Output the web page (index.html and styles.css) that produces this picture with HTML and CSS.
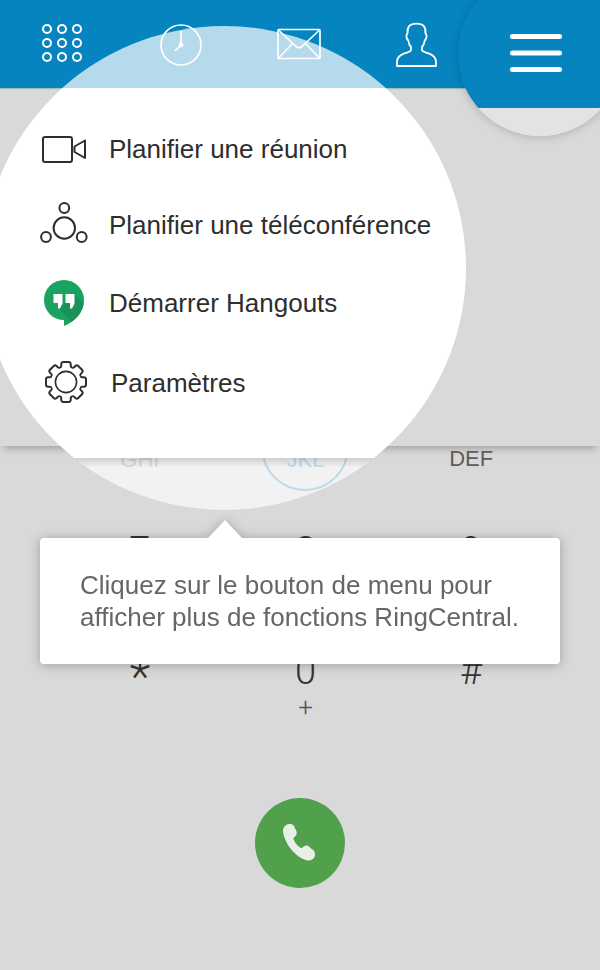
FILE: index.html
```html
<!DOCTYPE html>
<html lang="fr">
<head>
<meta charset="utf-8">
<meta name="viewport" content="width=device-width, initial-scale=1">
<title>RingCentral</title>
<link rel="stylesheet" href="styles.css">
</head>
<body>
<div class="screen">
  <header class="topbar">
    <nav class="tabs">
      <a class="tab" href="#clavier" aria-label="Clavier">
        <svg width="42" height="40" viewBox="0 0 42 40" fill="none" stroke="#fff" stroke-width="2">
          <circle cx="6" cy="5" r="4"/><circle cx="21" cy="5" r="4"/><circle cx="36" cy="5" r="4"/>
          <circle cx="6" cy="19" r="4"/><circle cx="21" cy="19" r="4"/><circle cx="36" cy="19" r="4"/>
          <circle cx="6" cy="33" r="4"/><circle cx="21" cy="33" r="4"/><circle cx="36" cy="33" r="4"/>
        </svg>
      </a>
      <a class="tab" href="#historique" aria-label="Historique">
        <svg width="42" height="44" viewBox="0 0 42 44" fill="none" stroke="#fff" stroke-width="1.7">
          <circle cx="21" cy="23" r="20"/>
          <path d="M21 9v14l-6 6"/>
          <circle cx="21" cy="23" r="1.6" fill="#fff"/>
        </svg>
      </a>
      <a class="tab" href="#messages" aria-label="Messages">
        <svg width="44" height="32" viewBox="0 0 44 32" fill="none" stroke="#fff" stroke-width="1.7" stroke-linejoin="round">
          <rect x="1" y="1.5" width="42" height="29" rx="1"/>
          <path d="M1.500 2 19 18.500Q22 21 25 18.500L42.500 2M1.500 30 15.500 15.500M42.500 30 28.500 15.500"/>
        </svg>
      </a>
      <a class="tab" href="#contacts" aria-label="Contacts">
        <svg width="42" height="46" viewBox="0 -1 42 46" fill="none" stroke="#fff" stroke-width="1.800" stroke-linejoin="round">
          <path d="M1 44V40C1 35 5 32.500 9 31.200C12 30.200 15 29.500 15 28V25C13.500 23.500 12.700 21.500 12.300 18.500C10.500 17 9.500 13 11.500 11.500C11 5 13.500 1.700 20.500 1.700S30 5 29.500 11.500C31.500 13 30.500 17 28.700 18.500C28.300 21.500 27.500 23.500 26 25V28C26 29.500 29 30.200 32 31.200C36 32.500 40 35 40 40V44Z"/>
        </svg>
      </a>
    </nav>
  </header>

  <ul class="menu">
    <li class="menu-row">
      <a class="menu-link" href="#reunion">
        <svg width="48" height="48" viewBox="0 0 48 48" fill="none" stroke="#2e2e2e" stroke-width="2" stroke-linejoin="round">
          <rect x="3" y="12" width="29" height="25" rx="2"/>
          <path d="M45 15.500V33L34.500 27V21.500Z"/>
        </svg>
        <span>Planifier une réunion</span>
      </a>
    </li>
    <li class="menu-row">
      <a class="menu-link" href="#teleconference">
        <svg width="48" height="48" viewBox="0 0 48 48" fill="none" stroke="#2e2e2e" stroke-width="2">
          <circle cx="24.300" cy="27" r="10.700"/>
          <circle cx="24.300" cy="7" r="4.900"/>
          <circle cx="6" cy="36" r="4.900"/>
          <circle cx="41.700" cy="36" r="4.900"/>
        </svg>
        <span>Planifier une téléconférence</span>
      </a>
    </li>
    <li class="menu-row menu-row-tall">
      <a class="menu-link" href="#hangouts">
        <svg width="48" height="48" viewBox="0 0 48 48">
          <path fill="#1aa260" d="M24 1a20 20 0 0 1 20 20.500C44 32 36 42 24 47V41A20 20 0 0 1 24 1Z"/>
          <path fill="#1b9158" d="M34.500 15 43.700 24C42.500 32 38.500 38 31.500 43L19 29Z"/>
          <path fill="#fff" d="M13.500 15h9v9.500l-2.500 5h-2v-5.500h-4.500zM25.500 15h9v9.500l-2.500 5h-2v-5.500h-4.500z"/>
        </svg>
        <span>Démarrer Hangouts</span>
      </a>
    </li>
    <li class="menu-row menu-row-tall">
      <a class="menu-link" href="#parametres">
        <svg width="50" height="48" viewBox="0 0 50 48" fill="none" stroke="#2e2e2e" stroke-width="2">
          <defs>
            <path id="tooth" d="M-6.200-14.970C-4.500-14.300-4.800-16.500-4.700-18Q-4.500-20-2.700-20H2.700Q4.500-20 4.700-18C4.800-16.500 4.500-14.300 6.200-14.970"/>
          </defs>
          <g transform="translate(26 23)">
            <circle r="10.600" stroke-width="1.600"/>
            <use href="#tooth"/>
            <use href="#tooth" transform="rotate(45)"/>
            <use href="#tooth" transform="rotate(90)"/>
            <use href="#tooth" transform="rotate(135)"/>
            <use href="#tooth" transform="rotate(180)"/>
            <use href="#tooth" transform="rotate(225)"/>
            <use href="#tooth" transform="rotate(270)"/>
            <use href="#tooth" transform="rotate(315)"/>
          </g>
        </svg>
        <span>Paramètres</span>
      </a>
    </li>
  </ul>

  <main class="dialer">
    <div class="keypad">
      <button class="key key-letters">GHI</button>
      <button class="key key-letters key-active">JKL</button>
      <button class="key key-letters key-dark">DEF</button>
      <button class="key">7</button>
      <button class="key">8</button>
      <button class="key">9</button>
      <button class="key key-star">*</button>
      <button class="key">0<span class="key-sub">+</span></button>
      <button class="key">#</button>
    </div>
    <button class="call" aria-label="Appeler">
      <svg width="90" height="90" viewBox="0 0 90 90">
        <path fill="#e8efe6" d="M34 26C38 25.500 39.500 28 40 30.500C41.500 32.500 42.500 35 41 37.500L38.500 40C38 43 43 48.500 46 50C48 50 48.500 47.500 51.500 47.500C54 47.500 54.500 49.500 56 50.500C58.500 51.500 60 53.500 60 56.500C60 60 57 62.500 53.500 62.500C48 62 43 58.500 38 53.500C33 48 28.500 40 28 33C28 29 30.500 26.500 34 26Z"/>
      </svg>
    </button>
  </main>

  <div class="spotlight"></div>

  <button class="menu-button" aria-label="Menu">
    <svg width="52" height="38" viewBox="0 0 52 38" stroke="#fff" stroke-width="5" stroke-linecap="round">
      <path d="M2.500 2.500h47M2.500 19h47M2.500 35.500h47"/>
    </svg>
  </button>

  <div class="tooltip" role="tooltip">
    <p class="tooltip-text">Cliquez sur le bouton de menu pour afficher plus de fonctions RingCentral.</p>
  </div>
</div>
</body>
</html>
```
FILE: styles.css
```css
* {
  box-sizing: border-box;
}

body {
  margin: 0;
  background: #d9d9d9;
  color: #2e2e2e;
  font-family: "Liberation Sans", Arial, sans-serif;
  font-size: 26px;
}

button {
  margin: 0;
  padding: 0;
  border: 0;
  background: none;
  color: inherit;
  font: inherit;
}

svg {
  display: block;
  flex: none;
}

.screen {
  position: relative;
  min-height: 100vh;
  overflow: hidden;
}

.topbar {
  padding: 0 5px 0 3px;
  background: #0684bf;
  box-shadow: 0 1px 1px rgba(6, 132, 140, 0.3);
}

.tabs {
  display: grid;
  grid-template-columns: repeat(5, 1fr);
  height: 88px;
}

.tab {
  position: relative;
  z-index: 2;
  display: flex;
  align-items: center;
  justify-content: center;
}

.menu {
  margin: 0;
  padding: 23px 40px;
  list-style: none;
  box-shadow: 0 6px 8px -4px rgba(0, 0, 0, 0.3);
}

.menu-row {
  display: flex;
  height: 76px;
}

.menu-row-tall {
  height: 80px;
}

.menu-link {
  position: relative;
  z-index: 2;
  display: flex;
  align-items: center;
  gap: 21px;
  color: inherit;
  text-decoration: none;
}

.dialer {
  display: flex;
  flex-direction: column;
  align-items: center;
  gap: 67px;
}

.keypad {
  display: grid;
  grid-template-columns: repeat(3, 1fr);
  grid-template-rows: 45px 120px 120px;
  align-self: stretch;
  justify-items: center;
  padding: 0 46px 0 57px;
}

.key {
  display: flex;
  flex-direction: column;
  align-items: center;
  justify-content: flex-end;
  min-width: 88px;
  color: #333;
  font-family: Roboto, "Liberation Sans", sans-serif;
  font-size: 38px;
  font-weight: 300;
  line-height: 40px;
  padding-bottom: 40px;
}

.key-letters {
  justify-content: flex-start;
  padding: 0;
  color: #8c8c8c;
  font-family: "Liberation Sans", Arial, sans-serif;
  font-size: 22px;
  font-weight: 400;
  line-height: 28px;
}

.key-dark {
  color: #5c5c5c;
  line-height: 25px;
}

.key-active {
  border: 2px solid #4a93bb;
  border-top: 0;
  border-radius: 0 0 44px 44px;
  color: #4a93bb;
}

.key-star {
  font-size: 48px;
  line-height: 28px;
}

.key-sub {
  height: 0;
  color: #555;
  font-size: 26px;
  line-height: 32px;
}

.call {
  width: 90px;
  height: 90px;
  border-radius: 50%;
  background: #50a04c;
}

.spotlight {
  position: absolute;
  z-index: 1;
  top: 26px;
  left: -18px;
  width: 484px;
  height: 484px;
  border-radius: 50%;
  background:
    linear-gradient(rgba(0, 0, 0, 0.15), rgba(0, 0, 0, 0)) 0 432px / 100% 9px no-repeat,
    linear-gradient(
      rgba(255, 255, 255, 0.7) 62px,
      #fff 62px,
      #fff 432px,
      rgba(255, 255, 255, 0.66) 432px
    );
  pointer-events: none;
}

.menu-button {
  position: absolute;
  z-index: 3;
  top: -28px;
  right: -22px;
  display: flex;
  align-items: center;
  justify-content: center;
  width: 164px;
  height: 164px;
  padding: 0 8px 2px 0;
  border-radius: 50%;
  background: linear-gradient(#0684bf 136px, #e3e3e3 136px);
  box-shadow: 0 1px 10px rgba(0, 0, 0, 0.2);
}

.tooltip {
  position: absolute;
  z-index: 4;
  top: 538px;
  right: 40px;
  left: 40px;
  padding: 31px 40px;
  border-radius: 4px;
  background: #fff;
  filter: drop-shadow(0 1px 6px rgba(0, 0, 0, 0.27));
}

.tooltip::before {
  content: "";
  position: absolute;
  top: -18px;
  left: 168px;
  width: 34px;
  height: 18px;
  background: #fff;
  clip-path: polygon(50% 0, 100% 100%, 0 100%);
}

.tooltip-text {
  margin: 0;
  color: #666;
  line-height: 32px;
}
```
